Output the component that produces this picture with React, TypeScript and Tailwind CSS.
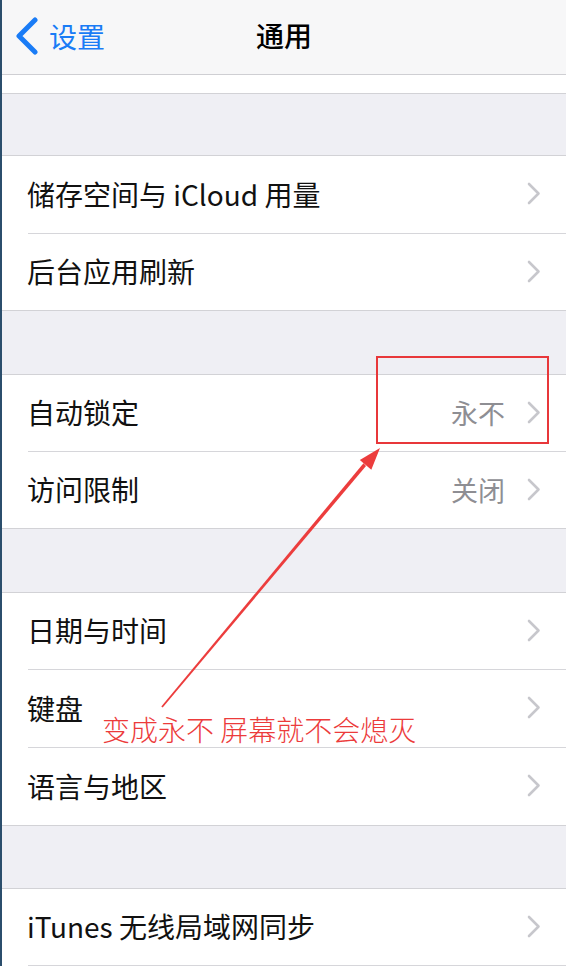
const font = { fontFamily: '"Noto Sans CJK SC", "Noto Sans", sans-serif' };

type Item = { label: string; value?: string; h: number };

const groups: Item[][] = [
  [
    { label: '储存空间与 iCloud 用量', h: 77 },
    { label: '后台应用刷新', h: 76 },
  ],
  [
    { label: '自动锁定', value: '永不', h: 76 },
    { label: '访问限制', value: '关闭', h: 76 },
  ],
  [
    { label: '日期与时间', h: 76 },
    { label: '键盘', h: 77 },
    { label: '语言与地区', h: 77 },
  ],
];

function Chevron() {
  return (
    <svg width="14" height="23" viewBox="0 0 14 23" className="shrink-0">
      <path d="M2 2 L11.5 11.5 L2 21" fill="none" stroke="#c7c7cc" strokeWidth="2.6" strokeLinecap="round" strokeLinejoin="round" />
    </svg>
  );
}

function Row({ item, last }: { item: Item; last: boolean }) {
  return (
    <div className="bg-white">
      <div className="flex items-center pl-[25px] pr-[25px] pb-[2px]" style={{ height: item.h }}>
        <span className="flex-1 text-[28px] text-[#111] leading-none">{item.label}</span>
        {item.value && <span className="text-[27px] text-[#8e8e93] leading-none mr-[22px]">{item.value}</span>}
        <Chevron />
      </div>
      {!last && <div className="ml-[26px] h-px bg-[#d6d6da]" />}
    </div>
  );
}

function Group({ items }: { items: Item[] }) {
  return (
    <div className="border-y border-[#d2d2d6]">
      {items.map((it, i) => (
        <Row key={it.label} item={it} last={i === items.length - 1} />
      ))}
    </div>
  );
}

export default function App() {
  return (
    <div className="relative w-[566px] h-[966px] overflow-hidden bg-[#efeff4] border-l-2 border-[#2b4e6c]" style={font}>
      {/* Nav bar */}
      <div className="h-[75px] bg-[#f7f7f8] border-b border-[#cfcfd3] flex items-center relative pb-[2px]">
        <div className="flex items-center text-[#1a7cf6] pl-[12px]">
          <svg width="26" height="38" viewBox="0 0 26 38">
            <path d="M21 3 L5 19 L21 35" fill="none" stroke="#1a7cf6" strokeWidth="5" strokeLinecap="round" strokeLinejoin="round" />
          </svg>
          <span className="text-[28px] leading-none ml-[9px]">设置</span>
        </div>
        <span className="absolute left-0 right-0 text-center text-[28px] font-medium text-black leading-none -mt-[2px]">通用</span>
      </div>
      <div className="h-[19px] bg-white border-b border-[#d2d2d6]" />

      <div className="h-[61px]" />
      <Group items={groups[0]} />
      <div className="h-[63px]" />
      <Group items={groups[1]} />
      <div className="h-[63px]" />
      <Group items={groups[2]} />
      <div className="h-[62px]" />
      <div className="border-t border-[#d2d2d6] bg-white">
        <div className="h-[76px] flex items-center pl-[25px] pr-[25px] pb-[2px]">
          <span className="flex-1 text-[28px] text-[#111] leading-none">iTunes 无线局域网同步</span>
          <Chevron />
        </div>
        <div className="ml-[26px] h-px bg-[#d6d6da]" />
      </div>

      {/* Annotation overlay */}
      <div className="absolute left-[374px] top-[356px] w-[173px] h-[88px] border-2 border-[#e8373a]" />
      <svg className="absolute left-0 top-0 pointer-events-none" width="566" height="966" viewBox="0 0 566 966">
        <polygon points="159.3,706.4 160.7,707.6 364,466 361.5,463.2" fill="#ec3d3d" />
        <polygon points="378,448 369.3,469.8 357.8,460" fill="#ec3d3d" />
      </svg>
      <span className="absolute left-[100px] top-[715px] text-[28px] leading-none text-[#ec3b3b] font-light whitespace-nowrap">
        变成永不 屏幕就不会熄灭
      </span>
    </div>
  );
}
